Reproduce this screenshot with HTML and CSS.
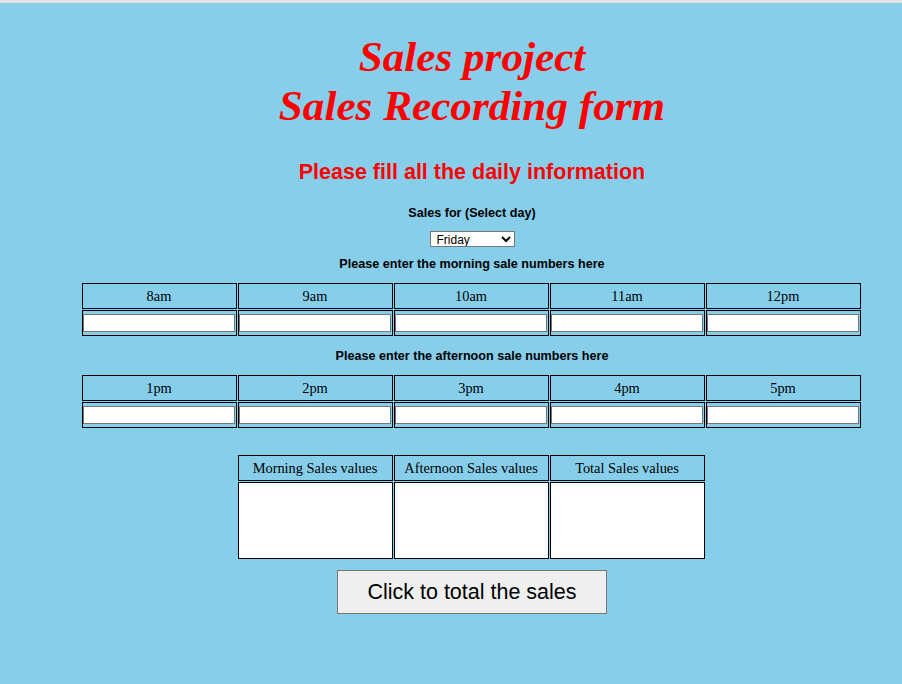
FILE: index.html
```html
<!DOCTYPE html>
<html>
<head>
<meta charset="utf-8">
<title>Sales project</title>
<link rel="stylesheet" href="styles.css">
</head>
<body>
<div class="page">
  <h1 class="title">Sales project<br>Sales Recording form</h1>
  <h2 class="subtitle">Please fill all the daily information</h2>
  <div class="label label-day">Sales for (Select day)</div>
  <select class="day-select">
    <option>Monday</option>
    <option>Tuesday</option>
    <option>Wednesday</option>
    <option>Thursday</option>
    <option selected>Friday</option>
  </select>
  <div class="label label-morning">Please enter the morning sale numbers here</div>
  <table class="grid grid-morning">
    <tr class="head"><td>8am</td><td>9am</td><td>10am</td><td>11am</td><td>12pm</td></tr>
    <tr class="inputs"><td><input type="text"></td><td><input type="text"></td><td><input type="text"></td><td><input type="text"></td><td><input type="text"></td></tr>
  </table>
  <div class="label label-afternoon">Please enter the afternoon sale numbers here</div>
  <table class="grid grid-afternoon">
    <tr class="head"><td>1pm</td><td>2pm</td><td>3pm</td><td>4pm</td><td>5pm</td></tr>
    <tr class="inputs"><td><input type="text"></td><td><input type="text"></td><td><input type="text"></td><td><input type="text"></td><td><input type="text"></td></tr>
  </table>
  <table class="grid grid-totals">
    <tr class="head"><td>Morning Sales values</td><td>Afternoon Sales values</td><td>Total Sales values</td></tr>
    <tr class="results"><td></td><td></td><td></td></tr>
  </table>
  <button class="total-btn" type="button">Click to total the sales</button>
</div>
</body>
</html>
```

FILE: styles.css
```css
html {
  background: #87ceeb;
}
body {
  margin: 0;
  background: #87ceeb;
  border-top: 3px solid #e2e2e2;
  font-family: "Liberation Sans", Arial, sans-serif;
  min-height: 681px;
}
.page {
  padding-left: 42px;
  display: flex;
  flex-direction: column;
  align-items: center;
  text-align: center;
}
.title {
  margin: 29px 0 0;
  font-family: "Liberation Serif", "Times New Roman", serif;
  font-size: 43.2px;
  line-height: 49px;
  font-weight: bold;
  font-style: italic;
  color: #ff0000;
}
.subtitle {
  margin: 30px 0 0;
  font-size: 21.5px;
  line-height: 25px;
  font-weight: bold;
  color: #ff0000;
}
.label {
  font-size: 12.6px;
  line-height: 15px;
  font-weight: bold;
  color: #000;
}
.label-day {
  margin-top: 21px;
}
.day-select {
  margin-top: 10px;
  width: 85px;
  height: 16px;
  padding: 0 0 0 2px;
  font-family: "Liberation Sans", Arial, sans-serif;
  font-size: 12px;
  border: 1px solid #767676;
  border-radius: 0;
  background: #fff;
  color: #000;
  box-sizing: border-box;
}
.label-morning {
  margin-top: 10px;
}
.grid {
  border-collapse: separate;
  border-spacing: 1px;
  font-family: "Liberation Serif", "Times New Roman", serif;
  font-size: 14.4px;
  color: #000;
}
.grid td {
  width: 153px;
  height: 24px;
  padding: 0;
  border: 1px solid #000;
  text-align: center;
  vertical-align: middle;
}
.grid input {
  display: block;
  box-sizing: border-box;
  width: 152px;
  height: 18px;
  margin: 0;
  padding: 1px 2px;
  border: 1px solid #767676;
  background: #fff;
}
.grid-morning,
.grid-afternoon {
  margin-left: -2px;
}
.grid-morning {
  margin-top: 10px;
}
.label-afternoon {
  margin-top: 12px;
}
.grid-afternoon {
  margin-top: 10px;
}
.grid-totals {
  margin-top: 25px;
  margin-left: -2px;
}
.grid-totals .results td {
  height: 75px;
  background: #fff;
}
.total-btn {
  margin-top: 10px;
  width: 270px;
  height: 44px;
  padding: 0;
  background: #efefef;
  border: 1px solid #767676;
  border-radius: 0;
  font-family: "Liberation Sans", Arial, sans-serif;
  font-size: 21.5px;
  color: #000;
}
```
